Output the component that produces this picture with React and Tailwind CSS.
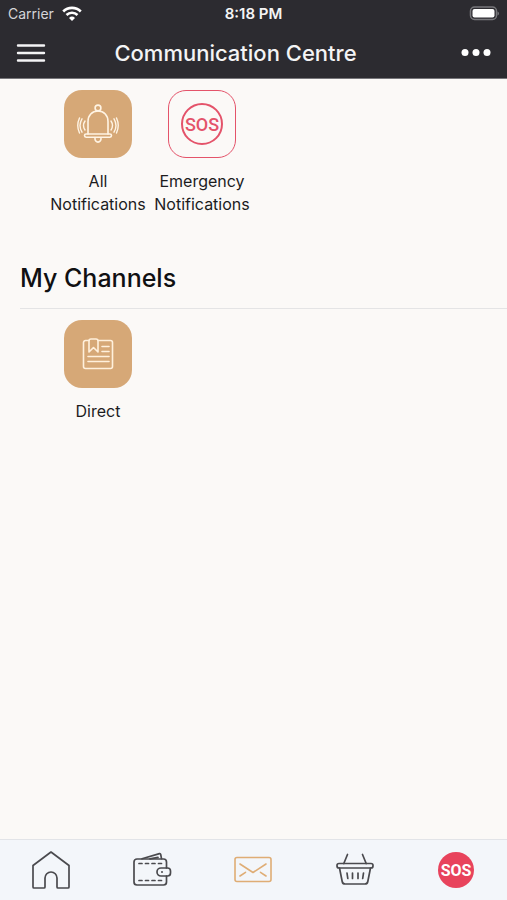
import React from "react";

const BellIcon = () => (
  <svg width="42" height="42" viewBox="0 0 42 42" fill="none" stroke="#fff4e4" strokeLinecap="round" strokeLinejoin="round" aria-hidden="true">
    <circle cx="21" cy="5" r="2.900" strokeWidth="1.600" />
    <path d="M11 31V18.500C11 12.500 15 8 21 8s10 4.500 10 10.500V31" strokeWidth="1.600" />
    <rect x="7.500" y="31" width="27" height="3.200" rx="1.600" strokeWidth="1.600" />
    <path d="M18 35c-.6 5.500 6.600 5.500 6 0" strokeWidth="1.600" />
    <path d="M8 18q-3 4.500 0 9M5 15.800q-4 6.700 0 13.400M2.500 15q-3.500 7.500 0 15" strokeWidth="1.400" />
    <path d="M34 18q3 4.500 0 9M37 15.800q4 6.700 0 13.400M39.500 15q3.500 7.500 0 15" strokeWidth="1.400" />
  </svg>
);

const NotesIcon = () => (
  <svg width="32" height="32" viewBox="0 0 32 32" fill="none" stroke="#fff0dc" strokeWidth="1.600" strokeLinecap="round" strokeLinejoin="round" aria-hidden="true">
    <path d="M7 2.500H3.500a2 2 0 0 0-2 2v24a2 2 0 0 0 2 2h25a2 2 0 0 0 2-2v-24a2 2 0 0 0-2-2H16" />
    <path d="M7 14V3a2 2 0 0 1 2-2h5a2 2 0 0 1 2 2v11l-4.500-4.500z" />
    <path d="M20 8.500h7M20 13.500h7M6 18.500h21M6 23.500h21" />
  </svg>
);

const SosIcon = () => (
  <svg width="44" height="44" viewBox="0 0 44 44" aria-hidden="true">
    <circle cx="22" cy="22" r="20" fill="none" stroke="#e4536a" strokeWidth="2" />
    <text x="22" y="29" textAnchor="middle" fontSize="18" fontWeight="500" fill="#e4536a" className="font-[Roboto,sans-serif]">SOS</text>
  </svg>
);

const HomeIcon = () => (
  <svg width="40" height="40" viewBox="0 0 40 40" fill="none" stroke="#4a4a4e" strokeWidth="1.700" strokeLinejoin="round" aria-hidden="true">
    <path d="M20 2 2 15.500V37q0 1 1 1h10q1 0 1-1V28a6 6 0 0 1 12 0v9q0 1 1 1h10q1 0 1-1V15.500z" />
  </svg>
);

const WalletIcon = () => (
  <svg width="40" height="40" viewBox="0 0 40 40" fill="none" stroke="#4a4a4e" strokeWidth="1.700" strokeLinecap="round" strokeLinejoin="round" aria-hidden="true">
    <path d="M34.500 18v-6a3 3 0 0 0-3-3H5a3 3 0 0 0-3 3v20a3 3 0 0 0 3 3h26.500a3 3 0 0 0 3-3v-6" />
    <path d="M10 8.800 27.500 3.600q1-.2 1.200.8l.8 4.200M18 8.800l8-1.500" />
    <path d="M29 18h6.500a3 3 0 0 1 3 3v2a3 3 0 0 1-3 3H29a4 4 0 0 1 0-8z" />
    <path d="M7 13.500h23M7 30.500h23" strokeDasharray="3 3.500" />
    <circle cx="30" cy="22" r="1" fill="#4a4a4e" stroke="none" />
  </svg>
);

const MailIcon = () => (
  <svg width="40" height="40" viewBox="0 0 40 40" fill="none" stroke="#dfad75" strokeWidth="1.600" strokeLinecap="round" strokeLinejoin="round" aria-hidden="true">
    <rect x="2" y="7.500" width="36" height="24" rx="2" />
    <path d="M7 14l13 8.500L33 14M7 26l5.500-3.700M33 26l-5.500-3.700" />
  </svg>
);

const BasketIcon = () => (
  <svg width="40" height="40" viewBox="0 0 40 40" fill="none" stroke="#4a4a4e" strokeWidth="1.700" strokeLinecap="round" strokeLinejoin="round" aria-hidden="true">
    <path d="M12.500 4.500 8.800 13.500M27.500 4.500l3.700 9" />
    <rect x="2" y="13.500" width="36" height="4.500" rx="2" />
    <path d="M4.500 18 7.200 31.500a3 3 0 0 0 3 2.500h19.600a3 3 0 0 0 3-2.500L35.500 18" />
    <path d="M12 23l.8 5.500M17.500 23v5.500M23 23v5.500M28.500 23l-.8 5.500" />
  </svg>
);

const SosBadge = () => (
  <svg width="40" height="40" viewBox="0 0 40 40" aria-hidden="true">
    <circle cx="20" cy="20" r="18" fill="#e8435c" />
    <text x="20" y="26" textAnchor="middle" fontSize="16" fontWeight="700" fill="#ffffff" className="font-[Roboto,sans-serif]">SOS</text>
  </svg>
);

const Tile = ({ icon, label, outlined }) => (
  <button type="button" className="flex w-[104px] flex-col items-center">
    <span
      className={
        outlined
          ? "flex size-[68px] items-center justify-center rounded-[18px] border border-[#e4536a]"
          : "flex size-[68px] items-center justify-center rounded-[18px] bg-[#d6a877]"
      }
    >
      {icon}
    </span>
    <span className="mt-3 text-base leading-[23px] text-[#1c1c1e]">{label}</span>
  </button>
);

const navItems = [
  { name: "Home", icon: <HomeIcon /> },
  { name: "Wallet", icon: <WalletIcon /> },
  { name: "Messages", icon: <MailIcon /> },
  { name: "Shop", icon: <BasketIcon /> },
  { name: "Emergency", icon: <SosBadge /> },
];

const App = () => {
  return (
    <div className="flex min-h-screen flex-col bg-[#fbf9f7] font-[Inter,sans-serif]">
      <header className="border-b border-[#77767a] bg-[#2c2b30] text-[#f4f4f5]">
        {/* status bar */}
        <div className="grid h-7 grid-cols-3 items-center px-2 text-sm">
          <div className="flex items-center gap-2 text-[#d5d5d8]">
            Carrier
            <svg width="20" height="16" viewBox="0 0 20 16" fill="none" stroke="#ffffff" strokeWidth="2.600" aria-hidden="true">
              <path d="M1.200 5.500a12.500 12.500 0 0 1 17.600 0M4.500 9a7.800 7.800 0 0 1 11 0" />
              <path d="M10 15 7 12a4.300 4.300 0 0 1 6 0z" fill="#ffffff" stroke="none" />
            </svg>
          </div>
          <div className="text-center text-[15px] font-semibold">8:18 PM</div>
          <div className="flex justify-end">
            <svg width="30" height="16" viewBox="0 0 30 16" aria-hidden="true">
              <rect x="1.500" y="1" width="26" height="12.500" rx="4" fill="none" stroke="#77777b" strokeWidth="1.500" />
              <rect x="3.500" y="3" width="22" height="8.500" rx="2" fill="#ffffff" />
              <path d="M28.500 5.500v4q1.500-.6 1.500-2t-1.500-2z" fill="#77777b" />
            </svg>
          </div>
        </div>

        {/* title bar */}
        <div className="flex h-[50px] items-center px-4">
          <button type="button" aria-label="Menu">
            <svg width="30" height="20" viewBox="0 0 30 20" stroke="#f4f4f5" strokeWidth="2.400" strokeLinecap="round" aria-hidden="true">
              <path d="M2 2.500h26M2 10h26M2 17.500h26" />
            </svg>
          </button>
          <h1 className="flex-1 pr-9 text-center text-[22px] leading-7 font-medium">Communication Centre</h1>
          <button type="button" aria-label="More">
            <svg width="30" height="20" viewBox="0 0 30 20" fill="#ffffff" aria-hidden="true">
              <circle cx="4" cy="9.500" r="3.500" />
              <circle cx="15" cy="9.500" r="3.500" />
              <circle cx="26" cy="9.500" r="3.500" />
            </svg>
          </button>
        </div>
      </header>

      <main className="flex-1">
        <div className="flex items-start px-[46px] pt-[11px]">
          <Tile icon={<BellIcon />} label="All Notifications" />
          <Tile icon={<SosIcon />} label="Emergency Notifications" outlined />
        </div>

        {/* channels */}
        <section className="mt-11">
          <h2 className="ml-5 border-b border-[#e4e4e5] pb-3 text-[25px] leading-9 font-medium text-[#101012]">
            My Channels
          </h2>
          <div className="flex items-start px-[46px] pt-[11px]">
            <Tile icon={<NotesIcon />} label="Direct" />
          </div>
        </section>
      </main>

      {/* bottom nav */}
      <nav className="grid h-[61px] grid-cols-5 border-t border-[#e2e4e8] bg-[#f3f6fa]">
        {navItems.map((item) => (
          <button key={item.name} type="button" aria-label={item.name} className="flex items-center justify-center">
            {item.icon}
          </button>
        ))}
      </nav>
    </div>
  );
};

export default App;
